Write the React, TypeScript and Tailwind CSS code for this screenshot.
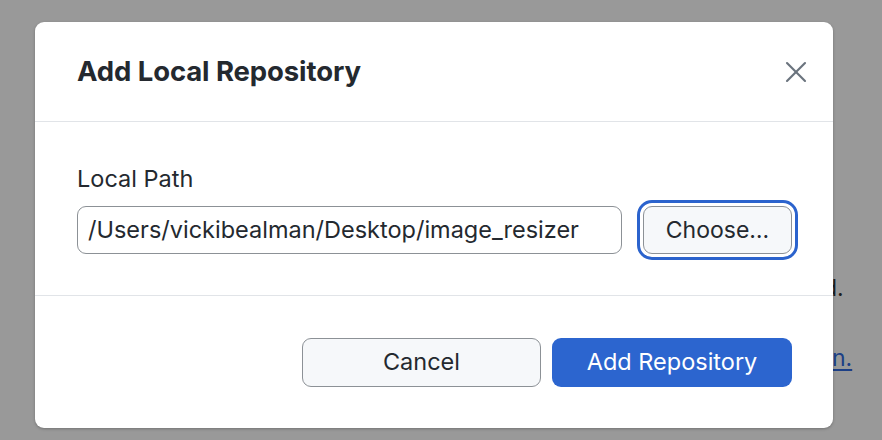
import { X } from "lucide-react";

export default function App() {
  return (
    <div
      className="relative w-[882px] h-[440px] overflow-hidden bg-[#999999]"
      style={{ fontFamily: "Inter, 'Noto Sans', sans-serif" }}
    >
      {/* page behind the overlay, only the strip right of the dialog shows */}
      <div className="flex justify-end">
        <div className="w-[49px] pt-[273px] flex flex-col gap-[40px] text-[23px] text-[#1f1f1f]">
          <p className="leading-[30px] -ml-[10px]">d.</p>
          <p className="leading-[30px] -ml-[1px] text-[#1c3f86] underline underline-offset-[3px]">n.</p>
        </div>
      </div>

      {/* dialog */}
      <div className="absolute left-[35px] top-[22px] w-[798px] h-[406px] bg-white rounded-[9px] shadow-[0_1px_3px_rgba(0,0,0,0.25)] flex flex-col text-[#24292f]">
        <div className="h-[100px] flex items-center justify-between pl-[42px] pr-[19px] border-b border-[#e1e4e8]">
          <h1 className="text-[27.5px] font-bold tracking-[-0.1px]">Add Local Repository</h1>
          <button className="text-[#6a737d]">
            <X size={36} strokeWidth={1.4} />
          </button>
        </div>

        <div className="h-[174px] flex flex-col pl-[42px] pr-[41px] pt-[42px] border-b border-[#e1e4e8]">
          <label className="text-[23.5px] leading-[30px] mb-[12px]">Local Path</label>
          <div className="flex items-center gap-[21px]">
            <div className="flex-1 h-[48px] flex items-center px-[10px] rounded-[9px] border-[1.5px] border-[#8c9196] text-[23.5px] whitespace-nowrap">
              /Users/vickibealman/Desktop/image_resizer
            </div>
            <button className="w-[149px] h-[48px] rounded-[9px] border-[1.5px] border-[#8c9196] bg-[#f6f8fa] text-[23px] outline-[3.5px] outline-solid outline-[#2b63cd] outline-offset-[3px]">
              Choose…
            </button>
          </div>
        </div>

        <div className="flex-1 flex items-center justify-end gap-[11px] pr-[41px]">
          <button className="w-[239px] h-[49px] rounded-[9px] border-[1.5px] border-[#8c9196] bg-[#f6f8fa] text-[23.5px]">
            Cancel
          </button>
          <button className="w-[240px] h-[49px] rounded-[9px] bg-[#2c65cf] text-white text-[23.5px]">
            Add Repository
          </button>
        </div>
      </div>
    </div>
  );
}
